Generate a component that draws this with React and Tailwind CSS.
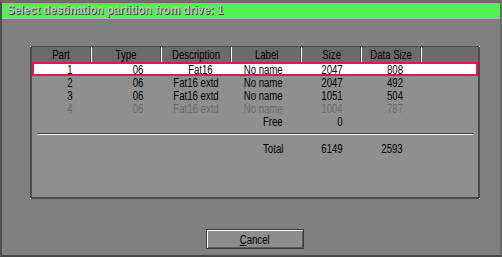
import React from 'react';

const cols = ['w-[60px]', 'w-[70px]', 'w-[70px]', 'w-[70px]', 'w-[60px]', 'w-[60px]'];
const heads = ['Part', 'Type', 'Description', 'Label', 'Size', 'Data Size'];

const rows = [
    { cells: ['1', '06', 'Fat16', 'No name', '2047', '808'], selected: true },
    { cells: ['2', '06', 'Fat16 extd', 'No name', '2047', '492'] },
    { cells: ['3', '06', 'Fat16 extd', 'No name', '1051', '504'] },
    { cells: ['4', '06', 'Fat16 extd', 'No name', '1004', '787'], dim: true },
    { cells: ['', '', '', 'Free', '0', ''] },
];

// the old bitmap font is narrow, so squeeze Liberation Sans a bit
function Narrow({ children, origin = 'origin-right' }) {
    return <span className={`inline-block whitespace-nowrap scale-x-[0.8] ${origin}`}>{children}</span>;
}

function Row({ cells, selected, dim, h = 'h-[13px]' }) {
    return (
        <div className={`flex items-center ${h} ${selected ? 'bg-white ring-2 ring-inset ring-[#d11d5a]' : ''} ${dim ? 'text-[#6c6c6c]' : 'text-black'}`}>
            {cells.map((c, i) => (
                <div key={i} className={`${cols[i]} shrink-0 text-right pr-[19px] pt-px leading-none whitespace-nowrap`}>
                    {c && <Narrow>{c}</Narrow>}
                </div>
            ))}
        </div>
    );
}

export default function App() {
    return (
        <div className="w-[502px] h-[257px] bg-[#808080] border-l-2 border-b-2 border-r-2 border-t-[3px] border-l-[#505050] border-b-[#484848] border-r-[#6a6a6a] border-t-[#6c6c6c] flex flex-col font-['Liberation_Sans',sans-serif] text-[12px] overflow-hidden">
            {/* title bar */}
            <div className="h-[16px] bg-[#50f050] flex items-center pl-[5px] border-b-2 border-[#b4b4b4] shrink-0">
                <span className="inline-block whitespace-nowrap origin-left scale-x-[0.94] font-bold text-[12px] text-[#c2c2c2] [text-shadow:1px_1px_0_#3e3e3e] leading-none">
                    Select destination partition from drive: 1
                </span>
            </div>

            {/* partition table panel */}
            <div className="relative ml-[28px] mt-[27px] w-[450px] h-[153px] bg-[#8f8f8f] border-l-2 border-t border-r-2 border-b-2 border-[#4c4c4c] shrink-0">
                <span className="absolute -left-[2px] -top-px w-px h-px bg-white" />
                <span className="absolute -right-[2px] -top-px w-px h-px bg-white" />
                <span className="absolute -left-[2px] -bottom-[2px] w-px h-px bg-white" />
                <span className="absolute -right-[2px] -bottom-[2px] w-px h-px bg-white" />

                <div className="flex h-[15px] bg-[#6b6b6b] text-black">
                    {heads.map((t, i) => (
                        <div key={t} className={`${cols[i]} shrink-0 flex items-center justify-center pt-px relative border-r border-white`}>
                            <span className="inline-block whitespace-nowrap scale-x-[0.8] leading-none">{t}</span>
                            <span className="absolute right-0 top-0 bottom-0 w-px bg-[#4a4a4a]" />
                        </div>
                    ))}
                    <div className="flex-1" />
                </div>

                <Row {...rows[0]} h="h-[14px]" />
                {rows.slice(1).map((r, i) => <Row key={i} {...r} />)}

                <div className="ml-[5px] mt-[5px] w-[436px] border-t border-[#3c3c3c] border-b border-b-white" />

                <div className="mt-[7px]">
                    <Row cells={['', '', '', 'Total', '6149', '2593']} />
                </div>
            </div>

            {/* button row */}
            <div className="flex justify-center mt-[30px] pl-[8px]">
                <button className="w-[98px] h-[20px] bg-[#8e8e8e] border border-[#3c3c3c] shadow-[inset_1px_1px_0_#ffffff,inset_-1px_-1px_0_#5a5a5a] text-black text-[12px] leading-none pt-px">
                    <span className="inline-block scale-x-[0.8]"><u>C</u>ancel</span>
                </button>
            </div>
        </div>
    );
}
